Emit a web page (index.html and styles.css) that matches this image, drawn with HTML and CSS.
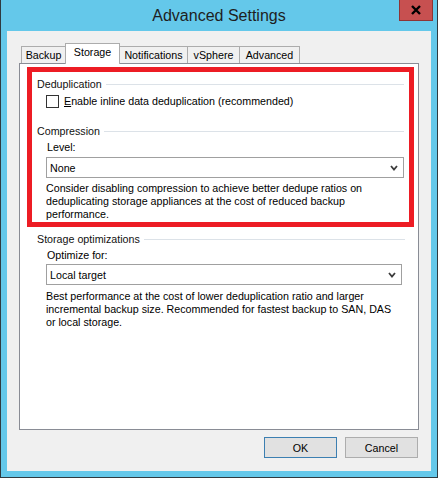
FILE: index.html
```html
<!DOCTYPE html>
<html>
<head>
<meta charset="utf-8">
<link rel="stylesheet" href="styles.css">
</head>
<body>
<div class="window">
  <div class="titlebar">
    <div class="title">Advanced Settings</div>
    <div class="close">
      <svg width="12" height="10" viewBox="0 0 12 10"><path d="M2 1 L10 9 M10 1 L2 9" stroke="#000" stroke-width="2.4" fill="none"/></svg>
    </div>
  </div>
  <div class="client">
    <div class="tabs">
      <div class="tab t-backup">Backup</div>
      <div class="tab active t-storage">Storage</div>
      <div class="tab t-notif">Notifications</div>
      <div class="tab t-vsphere">vSphere</div>
      <div class="tab t-adv">Advanced</div>
    </div>
    <div class="panel">
      <div class="highlight">
        <section class="group">
          <div class="group-head"><span>Deduplication</span></div>
          <div class="group-body">
            <label class="check"><span class="box"></span><span><u>E</u>nable inline data deduplication (recommended)</span></label>
          </div>
        </section>
        <section class="group compression">
          <div class="group-head"><span>Compression</span></div>
          <div class="group-body">
            <div class="field-label">Level:</div>
            <div class="combo"><span>None</span><svg width="8" height="6" viewBox="0 0 8 6"><path d="M1 1 L4 4.5 L7 1" stroke="#3c3c3c" stroke-width="1.8" fill="none"/></svg></div>
            <p class="desc">Consider disabling compression to achieve better dedupe ratios on<br>deduplicating storage appliances at the cost of reduced backup<br>performance.</p>
          </div>
        </section>
      </div>
      <section class="group storage">
        <div class="group-head"><span>Storage optimizations</span></div>
        <div class="group-body">
          <div class="field-label">Optimize for:</div>
          <div class="combo short"><span>Local target</span><svg width="8" height="6" viewBox="0 0 8 6"><path d="M1 1 L4 4.5 L7 1" stroke="#3c3c3c" stroke-width="1.8" fill="none"/></svg></div>
          <p class="desc">Best performance at the cost of lower deduplication ratio and larger<br>incremental backup size. Recommended for fastest backup to SAN, DAS<br>or local storage.</p>
        </div>
      </section>
    </div>
    <div class="buttons">
      <button class="btn default">OK</button>
      <button class="btn">Cancel</button>
    </div>
  </div>
</div>
</body>
</html>
```

FILE: styles.css
```css
* { box-sizing: border-box; }
html, body { margin: 0; padding: 0; }
body {
  font-family: "Liberation Sans", Arial, sans-serif;
  font-size: 10.7px;
  color: #000;
  background: #fff;
}
.window {
  width: 438px;
  height: 478px;
  background: #64c8ea;
  border: 1px solid #2f3a40;
  border-top: none;
  padding: 0 6px 6px;
  display: flex;
  flex-direction: column;
}
.titlebar {
  height: 31px;
  margin: 0 -6px;
  display: grid;
  grid-template-columns: 1fr auto 1fr;
  align-items: start;
}
.title {
  grid-column: 2;
  font-size: 16px;
  line-height: 18px;
  padding-top: 7px;
  color: #1e1e1e;
}
.close {
  grid-column: 3;
  justify-self: end;
  margin-right: 4px;
  width: 34px;
  height: 21px;
  background: #c75050;
  border: 1px solid #8e3535;
  border-top: none;
  display: flex;
  align-items: center;
  justify-content: center;
}
.client {
  flex: 1;
  background: #f0f0f0;
  padding: 12px 12px 12px 12px;
  display: flex;
  flex-direction: column;
}
.tabs {
  display: flex;
  align-items: flex-end;
  height: 20px;
  margin-left: 2px;
}
.tab {
  height: 17px;
  border: 1px solid #acacac;
  border-bottom: none;
  margin-right: -1px;
  background: #f0f0f0;
  line-height: 16px;
  text-align: center;
  white-space: nowrap;
  color: #000;
}
.tab.active {
  height: 21px;
  margin-bottom: -1px;
  background: #fff;
  position: relative;
  z-index: 1;
  line-height: 17px;
}
.t-backup { width: 45px; }
.t-storage { width: 55px; }
.t-notif { width: 69px; }
.t-vsphere { width: 53px; }
.t-adv { width: 61px; }
.panel {
  height: 367px;
  background: #fff;
  border: 1px solid #898c95;
  padding: 3px 4px 0 7px;
}
.highlight {
  border: 5px solid #ed1c24;
  padding-bottom: 1px;
}
.group { padding-right: 5px; }
.group-head {
  display: flex;
  align-items: center;
  height: 13px;
  line-height: 13px;
  padding-left: 5px;
  color: #111;
}
.group-head::after {
  content: "";
  flex: 1;
  height: 1px;
  background: #dce2e8;
  margin-left: 4px;
}
.group:first-child .group-head { margin-top: 6px; }
.group-body { padding-left: 14px; }
.check {
  display: flex;
  align-items: center;
  gap: 5px;
  margin-top: 4px;
  height: 13px;
  line-height: 13px;
}
.box {
  width: 13px;
  height: 13px;
  border: 1px solid #333;
  background: #fff;
}
.compression .group-head { margin-top: 17px; }
.field-label {
  height: 13px;
  line-height: 13px;
  margin-top: 3px;
  padding-left: 1px;
}
.combo {
  margin-top: 3px;
  height: 21px;
  border: 1px solid #a0a0a0;
  background: #fff;
  display: flex;
  align-items: center;
  justify-content: space-between;
  padding: 0 5px 0 3px;
}
.combo.short { margin-top: 2px; margin-right: 3px; }
.desc {
  margin: 4px 0 0;
  line-height: 13px;
}
.storage {
  margin: 6px 4px 0 5px;
}
.storage .desc { margin-top: 5px; }
.buttons {
  display: flex;
  justify-content: flex-end;
  gap: 8px;
  margin-top: 7px;
  padding-right: 1px;
}
.btn {
  width: 73px;
  height: 21px;
  background: #e1e1e1;
  border: 1px solid #adadad;
  font-family: "Liberation Sans", Arial, sans-serif;
  font-size: 10.7px;
  color: #000;
  padding: 0;
}
.btn.default { border-color: #3c7fb1; }
```
